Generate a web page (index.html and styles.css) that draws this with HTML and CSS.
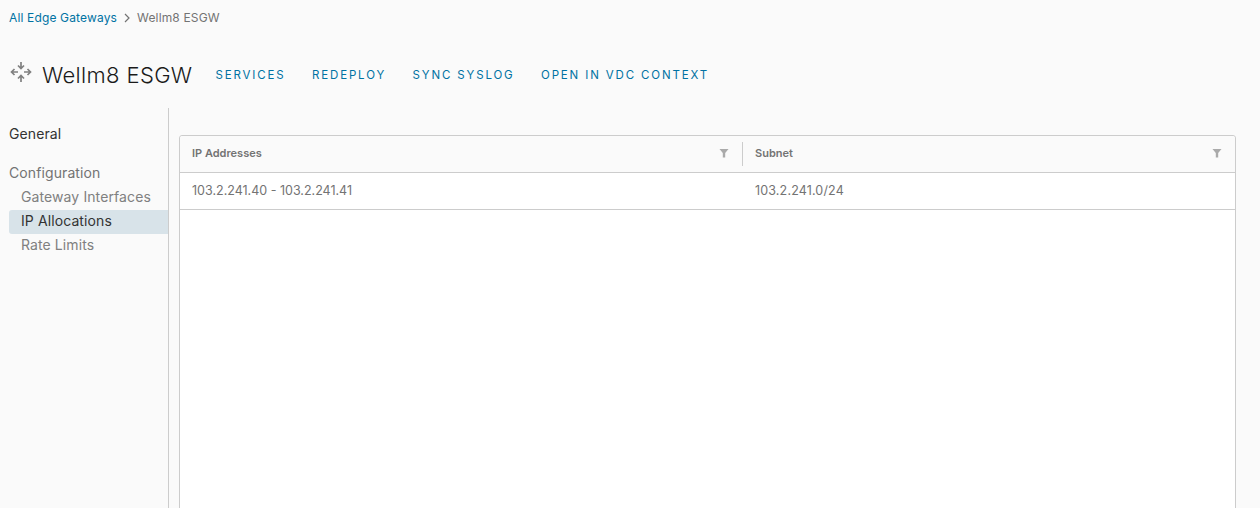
FILE: index.html
```html
<!DOCTYPE html>
<html lang="en">
<head>
<meta charset="utf-8">
<title>Wellm8 ESGW</title>
<link rel="stylesheet" href="styles.css">
</head>
<body>
<nav class="crumbs"><a class="crumb-link">All Edge Gateways</a><svg class="crumb-sep" width="8" height="10" viewBox="0 0 8 10"><path d="M2 1l4 4-4 4" fill="none" stroke="#737373" stroke-width="1.2"/></svg><span class="crumb-current">Wellm8 ESGW</span></nav>
<header class="head">
<svg class="head-icon" width="22" height="22" viewBox="0 0 22 22" fill="none" stroke="#808080" stroke-width="1.700"><path d="M11 1v6.500M8 4.500l3 3 3-3"/><path d="M11 21v-6.500M8 17.500l3-3 3 3"/><path d="M1.500 11H8M4.500 8l-3 3 3 3"/><path d="M14 11h6.500M17.500 8l3 3-3 3"/></svg>
<h1 class="title">Wellm8 ESGW</h1>
<div class="actions"><a class="action">Services</a><a class="action">Redeploy</a><a class="action">Sync Syslog</a><a class="action">Open in VDC Context</a></div>
</header>
<main class="body">
<aside class="side">
<div class="side-group side-general">General</div>
<div class="side-group side-config">Configuration</div>
<a class="side-item">Gateway Interfaces</a>
<a class="side-item side-active">IP Allocations</a>
<a class="side-item">Rate Limits</a>
</aside>
<section class="content">
<div class="grid">
<div class="grid-row grid-head">
<div class="cell cell-a"><span>IP Addresses</span><svg class="filter" width="10" height="10" viewBox="0 0 10 10"><path d="M0.500 1h9L6.200 5v4.500H3.800V5z" fill="#aaa"/></svg></div>
<div class="cell cell-b"><span>Subnet</span><svg class="filter" width="10" height="10" viewBox="0 0 10 10"><path d="M0.500 1h9L6.200 5v4.500H3.800V5z" fill="#aaa"/></svg></div>
</div>
<div class="grid-row grid-data">
<div class="cell cell-a">103.2.241.40 - 103.2.241.41</div>
<div class="cell cell-b cell-subnet">103.2.241.0/24</div>
</div>
</div>
</section>
</main>
</body>
</html>
```
FILE: styles.css
```css
html, body { margin: 0; height: 100%; overflow: hidden; }
body { background: #fafafa; font-family: Inter, "Open Sans", sans-serif; color: #565656; }
.crumbs { display: flex; align-items: center; height: 12px; padding: 12px 0 0 9px; font-size: 12px; line-height: 12px; letter-spacing: 0.150px; }
.crumb-link { color: #0072a3; }
.crumb-sep { margin: 0 6px; }
.crumb-current { color: #737373; }
.head { display: flex; align-items: center; height: 36px; margin-top: 33px; padding-left: 10px; }
.head-icon { flex: none; margin-bottom: 6px; }
.title { margin: 0 0 0 10px; font-size: 22px; font-weight: 300; color: #1a1a1a; white-space: nowrap; letter-spacing: 0.350px; }
.actions { display: flex; gap: 26.500px; margin-left: 23px; }
.action { color: #0072a3; font-size: 11.500px; letter-spacing: 1.850px; text-transform: uppercase; font-weight: 400; white-space: nowrap; }
.body { display: flex; margin-top: 15px; height: 400px; }
.side { width: 159px; margin-left: 9px; border-right: 1px solid #ccc; flex: none; padding-top: 14px; }
.side-group { font-size: 14px; line-height: 24px; letter-spacing: 0.100px; }
.side-general { color: #333; }
.side-config { margin-top: 15px; padding-bottom: 1px; color: #737373; }
.side-item { display: block; height: 24px; line-height: 22px; padding-left: 12px; font-size: 14px; letter-spacing: 0.100px; color: #808080; border-radius: 3px 0 0 3px; }
.side-active { background: #d8e3e9; color: #333; }
.content { flex: 1; padding: 27px 24px 0 10px; }
.grid { background: #fff; border: 1px solid #ccc; border-radius: 3px 3px 0 0; height: 420px; box-sizing: border-box; }
.grid-row { display: flex; border-bottom: 1px solid #ccc; }
.grid-head { height: 36px; background: #fafafa; font-size: 11px; font-weight: 600; color: #737373; border-radius: 3px 3px 0 0; }
.grid-data { height: 36px; font-size: 12.500px; color: #737373; }
.cell-subnet { letter-spacing: 0.150px; }
.cell { display: flex; align-items: center; justify-content: space-between; box-sizing: border-box; padding: 0 12px 2px; }
.cell-a { width: 563px; }
.cell-b { flex: 1; }
.grid-head .cell-a { position: relative; padding-right: 14px; }
.grid-head .cell-b { padding-right: 13px; }
.grid-head .cell-a::after { content: ""; position: absolute; right: 0; top: 6px; height: 24px; width: 1px; background: #ccc; }
.filter { flex: none; }
```
